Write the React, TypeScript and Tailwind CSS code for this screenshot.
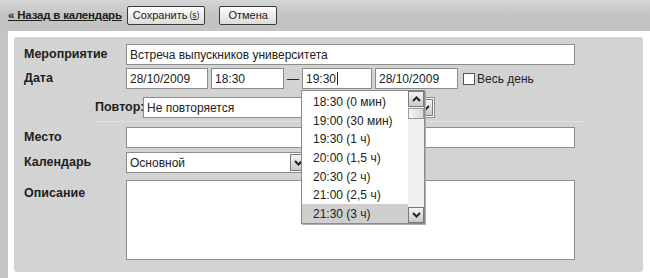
import React from 'react';

const font = "font-['Liberation_Sans',Arial,sans-serif]";

const inputCls = 'h-[21px] bg-white border border-[#8c8c8c] px-[3px] text-[12px] text-[#222] flex items-center leading-none';

const times = ['18:30 (0 мин)', '19:00 (30 мин)', '19:30 (1 ч)', '20:00 (1,5 ч)', '20:30 (2 ч)', '21:00 (2,5 ч)', '21:30 (3 ч)'];

const ArrowBtn: React.FC<{ dir: 'up' | 'down'; className?: string }> = ({ dir, className = '' }) => (
    <div className={`w-[16px] h-[16px] border border-[#7a7a7a] bg-gradient-to-b from-[#f4f4f4] to-[#c9c9c9] flex items-center justify-center ${className}`}>
        <svg width="9" height="6" viewBox="0 0 9 6">
            <path d={dir === 'up' ? 'M1 5 L4.5 1.5 L8 5' : 'M1 1 L4.5 4.5 L8 1'} fill="none" stroke="#222" strokeWidth="2" />
        </svg>
    </div>
);

const Label: React.FC<{ children: React.ReactNode; className?: string }> = ({ children, className = '' }) => (
    <div className={`w-[102px] shrink-0 text-[12.5px] font-bold text-[#1e1e1e] ${className}`}>{children}</div>
);

export default function App() {
    return (
        <div className={`w-[650px] h-[278px] bg-[#c4c4c4] flex flex-col overflow-hidden ${font}`}>
            {/* top toolbar */}
            <div className="h-[31px] shrink-0 flex items-center pl-[8px] bg-gradient-to-b from-[#d6d6d6] via-[#c4c4c4] to-[#c2c2c2]">
                <a href="#" className="text-[11.5px] font-bold text-[#1c1c1c] underline mr-[5px] tracking-[-0.2px]">« Назад в календарь</a>
                <button className="h-[19px] px-[5px] mr-[14px] rounded-[2px] border border-[#3a3a3a] bg-gradient-to-b from-[#ffffff] to-[#dcdcdc] text-[11px] text-[#222] flex items-center gap-[2px]">
                    Сохранить <span className="text-[8.5px]">(<span className="underline">s</span>)</span>
                </button>
                <button className="h-[19px] px-[8px] rounded-[2px] border border-[#3a3a3a] bg-gradient-to-b from-[#ffffff] to-[#dcdcdc] text-[11px] text-[#222] flex items-center">
                    Отмена
                </button>
            </div>

            {/* content frame */}
            <div className="flex-1 ml-[8px] bg-white pt-[6px] pl-[6px] pr-[7px]">
                <div className="relative h-[235px] bg-[#d3d3d3] rounded-[3px] pl-[10px] pt-[7px]">
                    {/* Мероприятие */}
                    <div className="flex items-center">
                        <Label>Мероприятие</Label>
                        <div className={`${inputCls} w-[449px]`}>Встреча выпускников университета</div>
                    </div>

                    {/* Дата */}
                    <div className="flex items-center mt-[3px]">
                        <Label>Дата</Label>
                        <div className={`${inputCls} w-[82px]`}>28/10/2009</div>
                        <div className={`${inputCls} w-[73px] ml-[3px]`}>18:30</div>
                        <div className="w-[18px] text-[12px] text-[#222] text-center">—</div>
                        <div className={`${inputCls} w-[70px]`}>
                            19:30<span className="inline-block w-px h-[13px] bg-[#222] ml-px" />
                        </div>
                        <div className={`${inputCls} w-[83px] ml-[3px]`}>28/10/2009</div>
                        <div className="w-[12px] h-[12px] ml-[5px] border border-[#555] bg-white" />
                        <span className="ml-[2px] text-[12px] text-[#222]">Весь день</span>
                    </div>

                    {/* Повтор */}
                    <div className="flex items-center mt-[8px] pb-[3px] ml-[71px] mr-[58px] border-b border-[#e0e0e0]">
                        <div className="w-[48px] text-right text-[12.5px] font-bold text-[#1e1e1e] pr-px">Повтор:</div>
                        <div className={`${inputCls} w-[292px] justify-between pr-px`}>
                            Не повторяется
                            <ArrowBtn dir="down" className="h-[17px]" />
                        </div>
                    </div>

                    {/* Место */}
                    <div className="flex items-center mt-[5px]">
                        <Label>Место</Label>
                        <div className={`${inputCls} h-[20px] w-[449px]`} />
                    </div>

                    {/* Календарь */}
                    <div className="flex items-center mt-[4px]">
                        <Label>Календарь</Label>
                        <div className={`${inputCls} w-[182px] justify-between pr-px`}>
                            Основной
                            <ArrowBtn dir="down" className="h-[17px]" />
                        </div>
                    </div>

                    {/* Описание */}
                    <div className="flex items-start mt-[7px]">
                        <Label className="pt-[4px]">Описание</Label>
                        <div className="w-[449px] h-[80px] bg-white border border-[#8c8c8c]" />
                    </div>

                    {/* open time dropdown */}
                    <div className="absolute left-[287px] top-[53px] w-[124px] h-[134px] bg-white border border-[#8a8a8a] flex shadow-[1px_1px_0_#b0b0b0]">
                        <div className="flex-1 flex flex-col pt-[2px]">
                            {times.map((t, i) => (
                                <div
                                    key={t}
                                    className={`h-[18.7px] pl-[11px] flex items-center text-[12px] text-[#222] ${i === times.length - 1 ? 'bg-[#cfcfcf]' : ''}`}
                                >
                                    {t}
                                </div>
                            ))}
                        </div>
                        <div className="w-[16px] flex flex-col bg-[#f0f0f0]">
                            <ArrowBtn dir="up" />
                            <div className="h-[11px] mt-px border border-[#9a9a9a] bg-gradient-to-r from-[#f6f6f6] to-[#d8d8d8]" />
                            <div className="flex-1" />
                            <ArrowBtn dir="down" />
                        </div>
                    </div>
                </div>
            </div>
        </div>
    );
}
